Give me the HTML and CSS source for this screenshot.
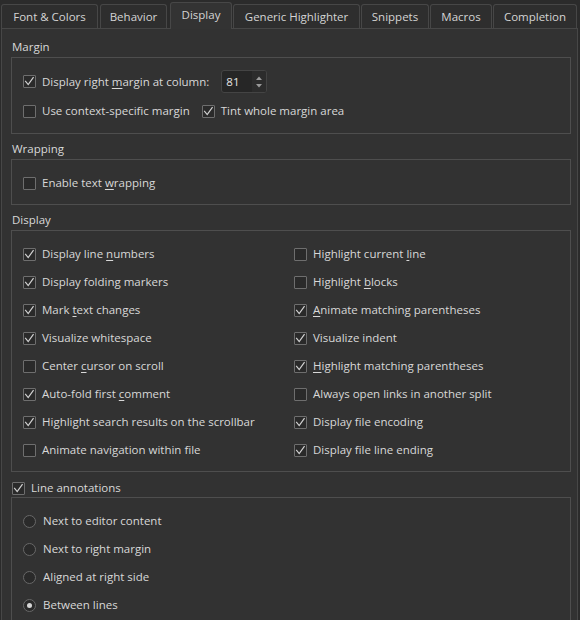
FILE: index.html
```html
<!DOCTYPE html>
<html>
<head>
<meta charset="utf-8">
<link rel="stylesheet" href="styles.css">
</head>
<body>
<div class="window">
  <div class="tabbar">
    <div class="tab t-font">Font &amp; Colors</div>
    <div class="tab t-behavior">Behavior</div>
    <div class="tab t-display active">Display</div>
    <div class="tab t-generic">Generic Highlighter</div>
    <div class="tab t-snippets">Snippets</div>
    <div class="tab t-macros">Macros</div>
    <div class="tab t-completion">Completion</div>
  </div>
  <div class="panel">
    <div class="section-title">Margin</div>
    <div class="group margin-group">
      <div class="row row-spin">
        <div class="check"><span class="box checked"><svg viewBox="0 0 13 13"><path d="M2.6 6.4 L5.2 9.6 L10.2 2.6"/></svg></span><span>Display right <u>m</u>argin at column:</span></div>
        <div class="spin"><span class="spin-val">81</span><span class="spin-btns"><svg viewBox="0 0 10 20"><path class="arrow" d="M2 8 L5 4.5 L8 8 Z"/><path class="arrow" d="M2 12 L5 15.5 L8 12 Z"/></svg></span></div>
      </div>
      <div class="row row-pair">
        <div class="check"><span class="box"></span><span>Use context-specific margin</span></div>
        <div class="check"><span class="box checked"><svg viewBox="0 0 13 13"><path d="M2.6 6.4 L5.2 9.6 L10.2 2.6"/></svg></span><span>Tint whole margin area</span></div>
      </div>
    </div>

    <div class="section-title spaced">Wrapping</div>
    <div class="group wrap-group">
      <div class="check"><span class="box"></span><span>Enable text <u>w</u>rapping</span></div>
    </div>

    <div class="section-title spaced">Display</div>
    <div class="group display-group">
      <div class="check"><span class="box checked"><svg viewBox="0 0 13 13"><path d="M2.6 6.4 L5.2 9.6 L10.2 2.6"/></svg></span><span>Display line <u>n</u>umbers</span></div>
      <div class="check"><span class="box"></span><span>Highlight current <u>l</u>ine</span></div>
      <div class="check"><span class="box checked"><svg viewBox="0 0 13 13"><path d="M2.6 6.4 L5.2 9.6 L10.2 2.6"/></svg></span><span>Display folding markers</span></div>
      <div class="check"><span class="box"></span><span>Highlight <u>b</u>locks</span></div>
      <div class="check"><span class="box checked"><svg viewBox="0 0 13 13"><path d="M2.6 6.4 L5.2 9.6 L10.2 2.6"/></svg></span><span>Mark <u>t</u>ext changes</span></div>
      <div class="check"><span class="box checked"><svg viewBox="0 0 13 13"><path d="M2.6 6.4 L5.2 9.6 L10.2 2.6"/></svg></span><span><u>A</u>nimate matching parentheses</span></div>
      <div class="check"><span class="box checked"><svg viewBox="0 0 13 13"><path d="M2.6 6.4 L5.2 9.6 L10.2 2.6"/></svg></span><span>Visualize whitespace</span></div>
      <div class="check"><span class="box checked"><svg viewBox="0 0 13 13"><path d="M2.6 6.4 L5.2 9.6 L10.2 2.6"/></svg></span><span>Visualize indent</span></div>
      <div class="check"><span class="box"></span><span>Center <u>c</u>ursor on scroll</span></div>
      <div class="check"><span class="box checked"><svg viewBox="0 0 13 13"><path d="M2.6 6.4 L5.2 9.6 L10.2 2.6"/></svg></span><span><u>H</u>ighlight matching parentheses</span></div>
      <div class="check"><span class="box checked"><svg viewBox="0 0 13 13"><path d="M2.6 6.4 L5.2 9.6 L10.2 2.6"/></svg></span><span>Auto-fold first <u>c</u>omment</span></div>
      <div class="check"><span class="box"></span><span>Always open links in another split</span></div>
      <div class="check"><span class="box checked"><svg viewBox="0 0 13 13"><path d="M2.6 6.4 L5.2 9.6 L10.2 2.6"/></svg></span><span>Highlight search results on the scrollbar</span></div>
      <div class="check"><span class="box checked"><svg viewBox="0 0 13 13"><path d="M2.6 6.4 L5.2 9.6 L10.2 2.6"/></svg></span><span>Display file encoding</span></div>
      <div class="check"><span class="box"></span><span>Animate navigation within file</span></div>
      <div class="check"><span class="box checked"><svg viewBox="0 0 13 13"><path d="M2.6 6.4 L5.2 9.6 L10.2 2.6"/></svg></span><span>Display file line ending</span></div>
    </div>

    <div class="section-check">
      <div class="check"><span class="box checked"><svg viewBox="0 0 13 13"><path d="M2.6 6.4 L5.2 9.6 L10.2 2.6"/></svg></span><span>Line annotations</span></div>
    </div>
    <div class="group annot-group">
      <div class="radio"><span class="circle"></span><span>Next to editor content</span></div>
      <div class="radio"><span class="circle"></span><span>Next to right margin</span></div>
      <div class="radio"><span class="circle"></span><span>Aligned at right side</span></div>
      <div class="radio"><span class="circle selected"></span><span>Between lines</span></div>
    </div>
  </div>
</div>
</body>
</html>
```
FILE: styles.css
```css
* { box-sizing: border-box; }

html, body {
  margin: 0;
  height: 620px;
  overflow: hidden;
}

body {
  background: #2b2b2b;
  font-family: "Open Sans", "Noto Sans", sans-serif;
  font-size: 11.5px;
  line-height: 16px;
  color: #d8d8d8;
}

u {
  text-decoration: underline;
  text-underline-offset: 2px;
  text-decoration-thickness: 1px;
}

.window {
  margin-left: 1px;
  width: 577px;
}

/* Tabs */
.tabbar {
  display: flex;
  align-items: flex-end;
  gap: 1px;
  height: 29px;
  border-bottom: 1px solid #474747;
}

.tab {
  height: 24px;
  border: 1px solid #474747;
  border-bottom: none;
  border-radius: 3px 3px 0 0;
  background: #2e2e2e;
  display: flex;
  align-items: center;
  justify-content: center;
  color: #d4d4d4;
  white-space: nowrap;
}

.tab.active {
  height: 27px;
  margin-bottom: -1px;
  background: #333333;
  padding-bottom: 2px;
}

.t-font { width: 97px; }
.t-behavior { width: 67px; margin-left: 1px; }
.t-display { width: 62px; margin-left: 2px; }
.t-generic { width: 127px; }
.t-snippets { width: 68px; }
.t-macros { width: 62px; }
.t-completion { width: 84px; }

/* Panel */
.panel {
  background: #323232;
  border-left: 1px solid #474747;
  border-right: 1px solid #474747;
  padding: 10px 6px 0 9px;
  height: 600px;
}

.section-title {
  height: 16px;
  padding-left: 1px;
  margin-bottom: 2px;
}

.section-title.spaced {
  margin-top: 7px;
}

.group {
  border: 1px solid #4e4e4e;
  padding: 0 11px;
}

.margin-group {
  padding-top: 12px;
  padding-bottom: 12px;
  display: flex;
  flex-direction: column;
  gap: 8px;
}

.row {
  display: flex;
  align-items: center;
}

.row-spin {
  height: 23px;
  gap: 12px;
}

.row-pair {
  gap: 12px;
}

.wrap-group {
  padding-top: 13px;
  padding-bottom: 11px;
}

.display-group {
  padding-top: 13px;
  padding-bottom: 11px;
  display: grid;
  grid-template-columns: 271px 1fr;
  row-gap: 8px;
}

.section-check {
  margin-top: 8px;
  margin-bottom: 1px;
  height: 16px;
  padding-left: 1px;
  display: flex;
  align-items: center;
}

.annot-group {
  padding-top: 13px;
  padding-bottom: 20px;
  display: flex;
  flex-direction: column;
  gap: 8px;
}

/* Checkbox */
.check {
  display: flex;
  align-items: center;
  gap: 6px;
  height: 20px;
  white-space: nowrap;
}

.section-check .check {
  height: 16px;
}

.box {
  width: 13px;
  height: 13px;
  flex: none;
  border: 1px solid #6e6e6e;
  background: #2a2a2a;
  border-radius: 1px;
  position: relative;
}

.box svg {
  position: absolute;
  left: -1px;
  top: -1px;
  width: 13px;
  height: 13px;
}

.box svg path {
  fill: none;
  stroke: #d2d2d2;
  stroke-width: 1.2;
  stroke-linecap: square;
  stroke-linejoin: miter;
}

/* Radio */
.radio {
  display: flex;
  align-items: center;
  gap: 7px;
  height: 20px;
  white-space: nowrap;
}

.circle {
  width: 13px;
  height: 13px;
  flex: none;
  border: 1px solid #686868;
  border-radius: 50%;
  background: #2a2a2a;
  display: flex;
  align-items: center;
  justify-content: center;
}

.circle.selected::after {
  content: "";
  width: 5px;
  height: 5px;
  border-radius: 50%;
  background: #d6d6d6;
}

/* Spin box */
.spin {
  width: 46px;
  height: 23px;
  border: 1px solid #444444;
  border-radius: 3px;
  background: #262626;
  display: flex;
  align-items: center;
  justify-content: space-between;
  padding-left: 4px;
  color: #e4e4e4;
}

.spin-btns {
  width: 14px;
  height: 21px;
  display: flex;
  align-items: center;
  justify-content: center;
  background: #2c2c2c;
  border-radius: 0 2px 2px 0;
}

.spin-btns svg {
  width: 10px;
  height: 20px;
}

.arrow {
  fill: #9a9a9a;
}
```
